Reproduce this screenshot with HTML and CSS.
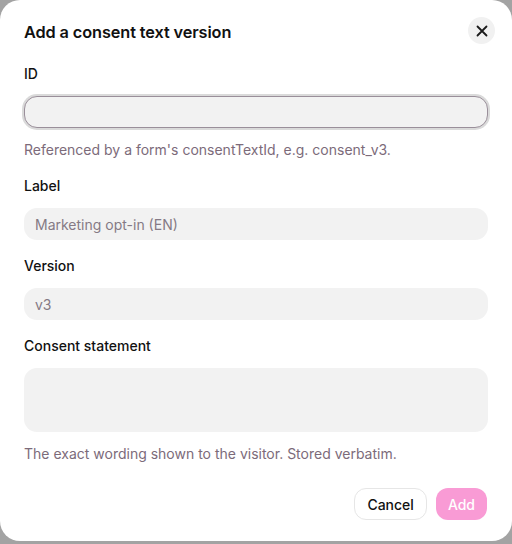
FILE: index.html
```html
<!DOCTYPE html>
<html lang="en">
<head>
<meta charset="utf-8">
<title>Add a consent text version</title>
<link rel="stylesheet" href="styles.css">
</head>
<body>
<div class="dialog">
  <div class="header">
    <h2 class="title">Add a consent text version</h2>
    <button class="close" aria-label="Close">
      <svg width="14" height="14" viewBox="0 0 14 14" fill="none" stroke="#1a1a1a" stroke-width="1.8" stroke-linecap="round"><path d="M2.5 2.5l9 9M11.5 2.5l-9 9"/></svg>
    </button>
  </div>
  <div class="field">
    <label class="label">ID</label>
    <div class="input focused"></div>
    <p class="help">Referenced by a form's consentTextId, e.g. consent_v3.</p>
  </div>
  <div class="field">
    <label class="label">Label</label>
    <div class="input"><span class="ph">Marketing opt-in (EN)</span></div>
  </div>
  <div class="field">
    <label class="label">Version</label>
    <div class="input"><span class="ph">v3</span></div>
  </div>
  <div class="field">
    <label class="label">Consent statement</label>
    <div class="textarea"></div>
    <p class="help">The exact wording shown to the visitor. Stored verbatim.</p>
  </div>
  <div class="actions">
    <button class="btn cancel">Cancel</button>
    <button class="btn add">Add</button>
  </div>
</div>
</body>
</html>
```
FILE: styles.css
```css
html, body { margin: 0; padding: 0; }
body {
  background: #a3a3a3;
  width: 512px;
  height: 544px;
  font-family: Inter, "Noto Sans", sans-serif;
  color: #111;
}
.dialog {
  box-sizing: border-box;
  width: 512px;
  height: 541px;
  background: #fff;
  border-radius: 20px;
  padding: 17px 24px 21px 24px;
  display: flex;
  flex-direction: column;
}
.header {
  display: flex;
  align-items: center;
  justify-content: space-between;
  margin-right: -7px;
  height: 27px;
}
.title {
  margin: 0;
  font-size: 16.3px;
  font-weight: 600;
  letter-spacing: -0.1px;
  color: #111;
  padding-top: 3px;
}
.close {
  width: 27px;
  height: 27px;
  border-radius: 50%;
  border: none;
  background: #f1f1f1;
  display: flex;
  align-items: center;
  justify-content: center;
  padding: 0;
}
.field {
  display: flex;
  flex-direction: column;
  margin-top: 20px;
}
.field + .field { margin-top: 16px; }
.label {
  font-size: 14px;
  font-weight: 500;
  line-height: 20px;
  color: #111;
}
.input {
  box-sizing: border-box;
  margin-top: 12px;
  height: 32px;
  border-radius: 13px;
  background: #f2f2f2;
  display: flex;
  align-items: center;
  padding: 0 11px;
}
.field:first-of-type .input { margin-top: 11px; }
.input.focused {
  border: 1px solid #9a8f9a;
  box-shadow: 0 0 0 2px #dadada;
}
.ph {
  font-size: 14px;
  color: #857a85;
}
.textarea {
  margin-top: 12px;
  height: 64px;
  border-radius: 13px;
  background: #f2f2f2;
}
.help {
  margin: 12px 0 0;
  font-size: 14px;
  line-height: 20px;
  color: #7c6b7a;
}
.actions {
  display: flex;
  justify-content: flex-end;
  gap: 9px;
  margin-top: auto;
  padding-right: 1px;
}
.btn {
  font-family: Inter, "Noto Sans", sans-serif;
  font-size: 14px;
  font-weight: 500;
  height: 32px;
  border-radius: 12px;
  padding: 0 12px;
}
.cancel {
  background: #fff;
  border: 1px solid #e6e6e6;
  color: #111;
}
.add {
  background: #f99bd5;
  border: none;
  color: #fff;
  padding: 0 12px;
}
```
